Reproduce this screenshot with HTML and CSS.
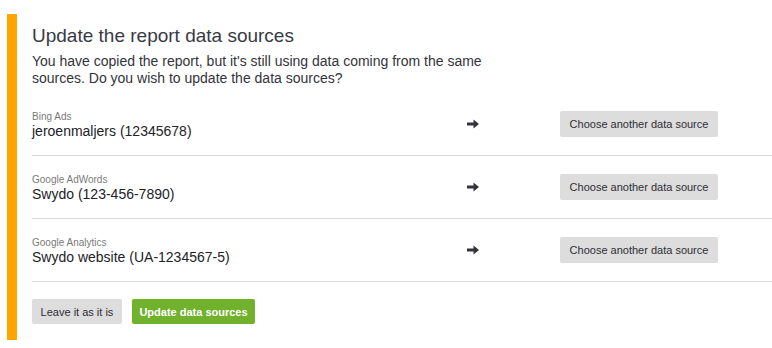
FILE: index.html
```html
<!DOCTYPE html>
<html>
<head>
<meta charset="utf-8">
<link rel="stylesheet" href="styles.css">
</head>
<body>
<div class="panel">
  <h1 class="title">Update the report data sources</h1>
  <p class="intro">You have copied the report, but it's still using data coming from the same sources. Do you wish to update the data sources?</p>
  <div class="rows">
    <div class="row">
      <div class="source">
        <div class="label">Bing Ads</div>
        <div class="value">jeroenmaljers (12345678)</div>
      </div>
      <svg class="arrow" width="12" height="10" viewBox="0 0 12 10"><path d="M0 3.5h6.5V0.5L12 5l-5.5 4.5V6.5H0z" fill="#33333b"/></svg>
      <button class="btn btn-grey choose">Choose another data source</button>
    </div>
    <div class="row">
      <div class="source">
        <div class="label">Google AdWords</div>
        <div class="value">Swydo (123-456-7890)</div>
      </div>
      <svg class="arrow" width="12" height="10" viewBox="0 0 12 10"><path d="M0 3.5h6.5V0.5L12 5l-5.5 4.5V6.5H0z" fill="#33333b"/></svg>
      <button class="btn btn-grey choose">Choose another data source</button>
    </div>
    <div class="row">
      <div class="source">
        <div class="label">Google Analytics</div>
        <div class="value">Swydo website (UA-1234567-5)</div>
      </div>
      <svg class="arrow" width="12" height="10" viewBox="0 0 12 10"><path d="M0 3.5h6.5V0.5L12 5l-5.5 4.5V6.5H0z" fill="#33333b"/></svg>
      <button class="btn btn-grey choose">Choose another data source</button>
    </div>
  </div>
  <div class="actions">
    <button class="btn btn-grey">Leave it as it is</button>
    <button class="btn btn-green">Update data sources</button>
  </div>
</div>
</body>
</html>
```

FILE: styles.css
```css
html, body {
  margin: 0;
  padding: 0;
  background: #fff;
}
body {
  font-family: "Liberation Sans", Arial, Helvetica, sans-serif;
  color: #33333b;
}
.panel {
  margin: 14px 0 0 7px;
  border-left: 10px solid #ffa500;
  padding: 10px 0 0 15px;
  height: 316px;
}
.title {
  margin: 0 0 5px;
  font-size: 19px;
  line-height: 24px;
  font-weight: normal;
  color: #3a3a44;
}
.intro {
  margin: 0;
  width: 458px;
  font-size: 14px;
  line-height: 17px;
}
.rows {
  margin-top: 6px;
}
.row {
  display: flex;
  align-items: center;
  height: 62px;
  border-bottom: 1px solid #dcdcdc;
  padding-right: 54px;
}
.source {
  flex: 1;
  padding-top: 3px;
}
.label {
  font-size: 10px;
  line-height: 12px;
  color: #7a7a7a;
}
.value {
  font-size: 14px;
  line-height: 17px;
  color: #222228;
}
.arrow {
  display: block;
  margin-right: 81px;
}
.btn {
  font-family: "Liberation Sans", Arial, Helvetica, sans-serif;
  font-size: 11px;
  border: 0;
  border-radius: 2px;
  cursor: pointer;
  margin: 0;
}
.btn-grey {
  background: #dddddd;
  color: #2e2e36;
}
.choose {
  width: 158px;
  height: 26px;
  padding: 0;
}
.actions {
  display: flex;
  gap: 10px;
  margin-top: 17px;
}
.actions .btn {
  height: 25px;
}
.actions .btn-grey {
  width: 90px;
  padding: 0;
}
.btn-green {
  width: 123px;
  padding: 0;
  background: #70b22d;
  color: #fff;
  font-weight: bold;
}
```
